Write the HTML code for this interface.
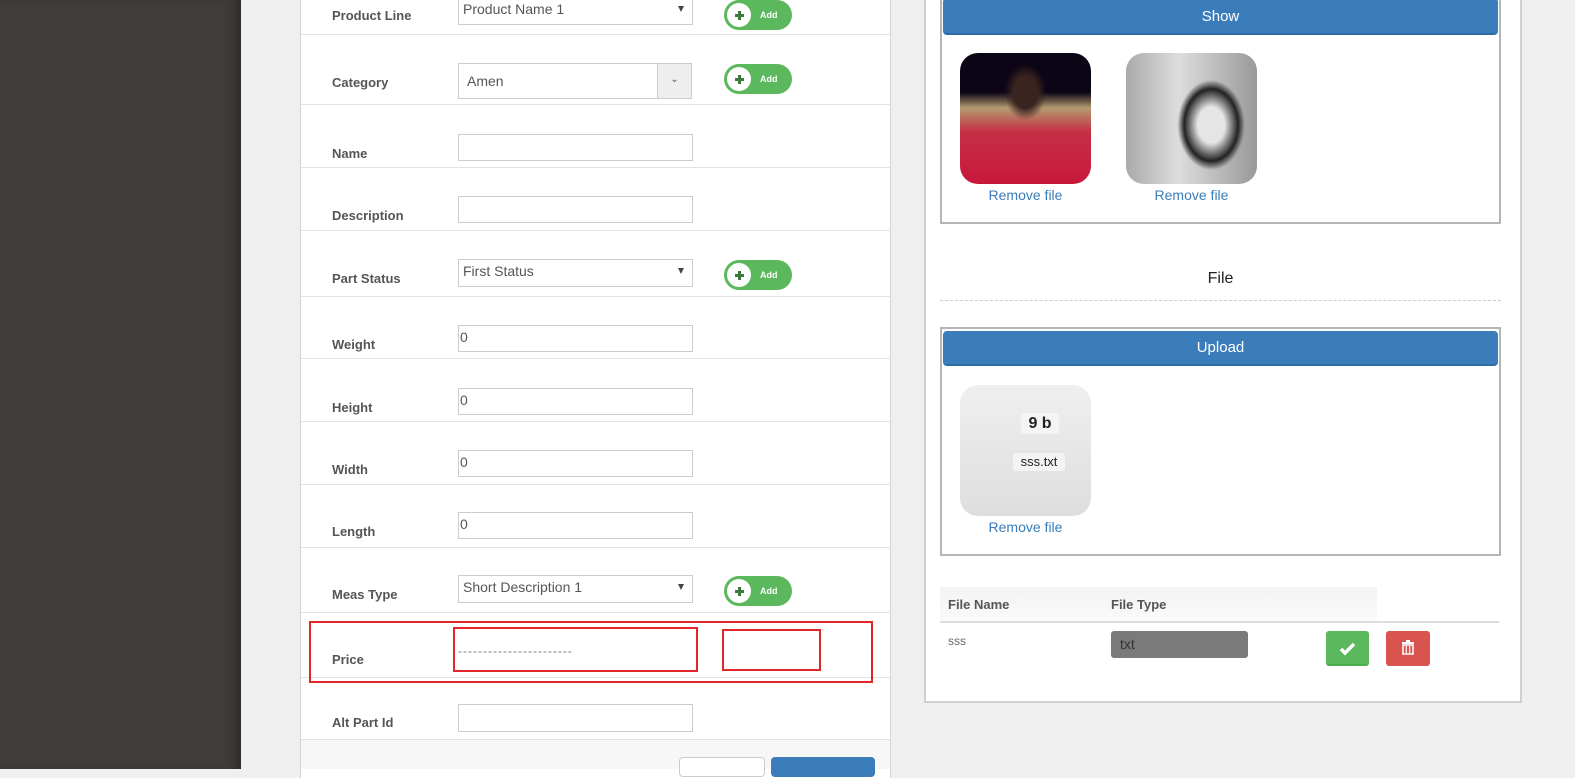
<!DOCTYPE html>
<html><head><meta charset="utf-8"><style>
*{box-sizing:border-box;margin:0;padding:0}
body{width:1575px;height:769px;overflow:hidden;background:#efefef;font-family:"Liberation Sans",sans-serif;position:relative}
.a{position:absolute}
#dark{left:0;top:0;width:241px;height:769px;background:#403c39;box-shadow:inset -12px 0 12px -8px #2a2725}
#form{left:300px;top:-2px;width:591px;height:780px;background:#fff;border-left:1px solid #d4d4d4;border-right:1px solid #d4d4d4}
.hr{left:301px;width:589px;height:1px;background:#e3e3e3}
.lbl{left:332px;font-size:13px;font-weight:bold;color:#555}
.inp{left:458px;width:235px;height:27px;border:1px solid #ccc;background:#fff;font-size:14px;color:#555;padding:3px 0 0 1px}
.sel{padding-left:4px}
.sel:after{content:"";position:absolute;right:8px;top:8px;border:3px solid transparent;border-top:6px solid #444;border-bottom:0}
.add{left:724px;width:68px;height:30px;border-radius:15px;background:#5cb85c;}
.add .k{position:absolute;left:3px;top:3px;width:24px;height:24px;border-radius:50%;background:#fff}
.add .k:before{content:"";position:absolute;left:8px;top:11px;width:9px;height:3px;background:#3c7a3c}
.add .k:after{content:"";position:absolute;left:11px;top:8px;width:3px;height:9px;background:#3c7a3c}
.add span{position:absolute;left:36px;top:10px;font-size:9px;color:#fff;font-weight:bold}
#right{left:924px;top:-2px;width:598px;height:705px;background:#fff;border:2px solid #d0d0d0;border-top:0}
.box{left:940px;width:561px;border:2px solid #b5b5b5;background:#fff}
.btn{left:943px;width:555px;height:35px;background:#3a7dba;border-radius:4px;color:#fff;font-size:15px;text-align:center;line-height:33px;border-bottom:2px solid #2f6ca5}
.th{border-radius:18px;width:131px;height:131px}
.rm{font-size:14px;color:#3a7dba;width:131px;text-align:center}
</style></head><body>
<div id="dark" class="a"></div>
<div id="form" class="a"></div>
<div class="a hr" style="top:34px"></div>
<div class="a hr" style="top:104px"></div>
<div class="a hr" style="top:167px"></div>
<div class="a hr" style="top:230px"></div>
<div class="a hr" style="top:296px"></div>
<div class="a hr" style="top:358px"></div>
<div class="a hr" style="top:421px"></div>
<div class="a hr" style="top:484px"></div>
<div class="a hr" style="top:547px"></div>
<div class="a hr" style="top:612px"></div>
<div class="a hr" style="top:677px"></div>
<div class="a" style="left:301px;top:739px;width:589px;height:30px;background:#f7f7f7;border-top:1px solid #e0e0e0"></div>
<div class="a" style="left:679px;top:757px;width:86px;height:20px;background:#fff;border:1px solid #ccc;border-radius:4px"></div>
<div class="a" style="left:771px;top:757px;width:104px;height:20px;background:#3a7dba;border-radius:4px"></div>

<div class="a lbl" style="top:8px">Product Line</div>
<div class="a inp sel" style="top:-3px;height:28px">Product Name 1</div>
<div class="a add" style="top:0px"><div class="k"></div><span>Add</span></div>

<div class="a lbl" style="top:75px">Category</div>
<div class="a inp" style="top:63px;height:36px;padding:9px 0 0 8px;width:234px">Amen<div class="a" style="right:0;top:0;width:34px;height:34px;background:#eee;border-left:1px solid #ccc;font-size:10px;text-align:center;line-height:32px;color:#555">&#8964;</div></div>
<div class="a add" style="top:64px"><div class="k"></div><span>Add</span></div>

<div class="a lbl" style="top:146px">Name</div>
<div class="a inp" style="top:134px"></div>
<div class="a lbl" style="top:208px">Description</div>
<div class="a inp" style="top:196px"></div>

<div class="a lbl" style="top:271px">Part Status</div>
<div class="a inp sel" style="top:259px;height:28px">First Status</div>
<div class="a add" style="top:260px"><div class="k"></div><span>Add</span></div>

<div class="a lbl" style="top:337px">Weight</div>
<div class="a inp" style="top:325px">0</div>
<div class="a lbl" style="top:400px">Height</div>
<div class="a inp" style="top:388px">0</div>
<div class="a lbl" style="top:462px">Width</div>
<div class="a inp" style="top:450px">0</div>
<div class="a lbl" style="top:524px">Length</div>
<div class="a inp" style="top:512px">0</div>

<div class="a lbl" style="top:587px">Meas Type</div>
<div class="a inp sel" style="top:575px;height:28px">Short Description 1</div>
<div class="a add" style="top:576px"><div class="k"></div><span>Add</span></div>

<div class="a" style="left:309px;top:621px;width:564px;height:62px;border:2px solid #e3252b"></div>
<div class="a" style="left:453px;top:627px;width:245px;height:45px;border:2px solid #e3252b;font-size:12px;color:#777;padding:15px 0 0 3px;letter-spacing:1px;white-space:nowrap">-----------------------</div>
<div class="a" style="left:722px;top:629px;width:99px;height:42px;border:2px solid #e3252b"></div>
<div class="a lbl" style="top:652px">Price</div>

<div class="a lbl" style="top:715px">Alt Part Id</div>
<div class="a inp" style="top:704px;height:28px"></div>

<div id="right" class="a"></div>
<div class="a box" style="top:-3px;height:227px"></div>
<div class="a btn" style="top:-2px;height:37px;line-height:37px">Show</div>
<div class="a th" style="left:960px;top:53px;background:radial-gradient(ellipse 30px 40px at 50% 30%,#3a2420 40%,transparent 70%),linear-gradient(180deg,#0b0515 0%,#0b0515 30%,#b49a70 42%,#c43045 60%,#c8183a 100%)"></div>
<div class="a th" style="left:1126px;top:53px;background:radial-gradient(ellipse 45px 60px at 65% 55%,#e5e5e5 30%,#222 60%,transparent 75%),linear-gradient(90deg,#aaa,#ddd 40%,#999)"></div>
<div class="a rm" style="left:960px;top:187px">Remove file</div>
<div class="a rm" style="left:1126px;top:187px">Remove file</div>

<div class="a" style="left:940px;top:270px;width:561px;text-align:center;font-size:16px;color:#222">File</div>
<div class="a" style="left:940px;top:300px;width:561px;border-top:1px dashed #ccc"></div>

<div class="a box" style="top:327px;height:229px"></div>
<div class="a btn" style="top:331px">Upload</div>
<div class="a th" style="left:960px;top:385px;background:linear-gradient(#efefef,#dedede)"></div>
<div class="a" style="left:1021px;top:413px;width:38px;height:21px;background:#f4f4f4;border-radius:3px;font-size:16px;font-weight:bold;text-align:center;line-height:21px;color:#222">9 b</div>
<div class="a" style="left:1013px;top:453px;width:52px;height:18px;background:#f4f4f4;border-radius:3px;font-size:13px;text-align:center;line-height:18px;color:#222">sss.txt</div>
<div class="a rm" style="left:960px;top:519px">Remove file</div>

<div class="a" style="left:940px;top:587px;width:437px;height:34px;background:linear-gradient(#f3f3f3,#fafafa)"></div>
<div class="a" style="left:940px;top:621px;width:559px;height:2px;background:#ddd"></div>
<div class="a" style="left:948px;top:597px;font-size:13px;font-weight:bold;color:#555">File Name</div>
<div class="a" style="left:1111px;top:597px;font-size:13px;font-weight:bold;color:#555">File Type</div>
<div class="a" style="left:948px;top:634px;font-size:12px;color:#666">sss</div>
<div class="a" style="left:1111px;top:631px;width:137px;height:27px;background:#7a7a7a;border-radius:3px;font-size:14px;color:#333;padding:5px 0 0 9px">txt</div>
<div class="a" style="left:1326px;top:631px;width:43px;height:35px;background:#5cb85c;border-radius:3px;border-bottom:2px solid #4cae4c"><svg width="43" height="35" viewBox="0 0 43 35"><path d="M15 18l4 4 9-9" stroke="#fff" stroke-width="3.5" fill="none"/></svg></div>
<div class="a" style="left:1386px;top:631px;width:44px;height:35px;background:#d9534f;border-radius:3px"><svg width="44" height="35" viewBox="0 0 44 35"><rect x="16" y="11" width="12" height="2" fill="#fff"/><rect x="20" y="9" width="4" height="2" fill="#fff"/><path d="M17 14h10v9h-10z" fill="none" stroke="#fff" stroke-width="1.6"/><path d="M20.3 15v7M23.7 15v7" stroke="#fff" stroke-width="1.2"/></svg></div>
</body></html>
